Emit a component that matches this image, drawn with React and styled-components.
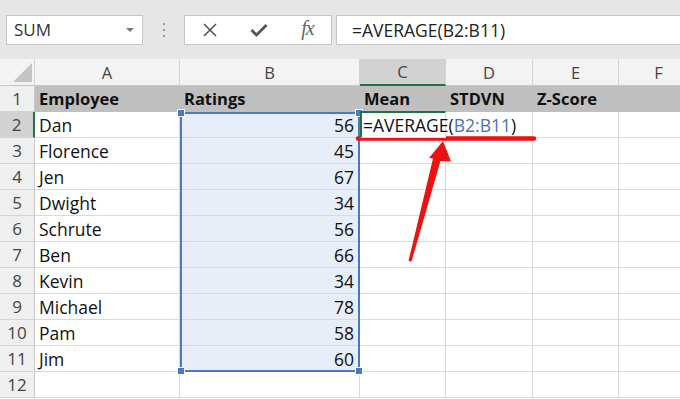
import React from "react";
import styled, { createGlobalStyle } from "styled-components";

const Global = createGlobalStyle`
  html, body { margin: 0; padding: 0; background: #fff; }
  body { font-family: "Open Sans", "Liberation Sans", sans-serif; }
`;

const COLS = [35, 145, 180, 86, 87, 86, 80];
const ROW_H = 26;

const Page = styled.div`
  position: relative;
  width: 680px;
  height: 399px;
  overflow: hidden;
  background: #fff;
`;

const Toolbar = styled.div`
  height: 59px;
  background: #e6e6e6;
  display: flex;
  align-items: center;
  padding: 0 0 0 6px;
  box-sizing: border-box;
`;

const NameBox = styled.div`
  width: 137px;
  height: 30px;
  background: #fff;
  border: 1px solid #c6c6c6;
  box-sizing: border-box;
  display: flex;
  align-items: center;
  justify-content: space-between;
  padding: 0 8px 0 7px;
  font-size: 17px;
  color: #333;
`;

const Caret = styled.span`
  width: 0;
  height: 0;
  border-left: 4px solid transparent;
  border-right: 4px solid transparent;
  border-top: 4px solid #777;
`;

const Grip = styled.div`
  width: 41px;
  display: flex;
  flex-direction: column;
  align-items: center;
  gap: 4px;
  span {
    width: 2px;
    height: 2px;
    background: #9a9a9a;
  }
`;

const IconBox = styled.div`
  width: 148px;
  height: 30px;
  background: #fff;
  border: 1px solid #c6c6c6;
  box-sizing: border-box;
  display: grid;
  grid-template-columns: repeat(3, 49px);
  align-items: center;
  justify-items: center;
  color: #555;
`;

const Fx = styled.span`
  font-family: "Liberation Serif", serif;
  font-style: italic;
  font-size: 20px;
  color: #666;
  letter-spacing: -1px;
  margin-top: -2px;
`;

const FormulaBox = styled.div`
  margin-left: 4px;
  flex: 1;
  height: 30px;
  background: #fff;
  border: 1px solid #c6c6c6;
  border-right: none;
  box-sizing: border-box;
  display: flex;
  align-items: center;
  padding-left: 15px;
  font-size: 17.5px;
  color: #222;
`;

const Sheet = styled.div`
  display: grid;
  grid-template-columns: ${COLS.map((c) => c + "px").join(" ")};
  grid-template-rows: 27px repeat(12, ${ROW_H}px);
`;

const ColHead = styled.div`
  background: ${(p) => (p.$active ? "#d2d2d2" : "#f3f3f3")};
  border-right: 1px solid #d4d4d4;
  border-bottom: ${(p) => (p.$active ? "2px solid #217346" : "1px solid #c8c8c8")};
  box-sizing: border-box;
  display: flex;
  align-items: center;
  justify-content: center;
  font-size: 16.5px;
  color: #444;
  position: relative;
`;

const Corner = styled(ColHead)`
  justify-content: flex-end;
  align-items: flex-end;
  padding: 0 2px 3px 0;
`;

const RowHead = styled.div`
  background: ${(p) => (p.$active ? "#d2d2d2" : "#efefef")};
  border-right: ${(p) => (p.$active ? "2px solid #217346" : "1px solid #c8c8c8")};
  border-bottom: 1px solid #d4d4d4;
  box-sizing: border-box;
  display: flex;
  align-items: center;
  justify-content: center;
  font-size: 17px;
  color: #444;
`;

const Cell = styled.div`
  background: ${(p) => (p.$title ? "#bfbfbf" : p.$sel ? "#e8eef8" : "#fff")};
  border-right: 1px solid ${(p) => (p.$title ? "#bfbfbf" : "#d9d9d9")};
  border-bottom: 1px solid ${(p) => (p.$title ? "#bfbfbf" : "#d9d9d9")};
  box-sizing: border-box;
  display: flex;
  align-items: center;
  justify-content: ${(p) => (p.$num ? "flex-end" : "flex-start")};
  padding: 0 5px 0 4px;
  font-size: ${(p) => (p.$title ? "16.5px" : "17.5px")};
  font-weight: ${(p) => (p.$title ? 700 : 400)};
  color: #111;
  white-space: nowrap;
  overflow: visible;
  position: relative;
  z-index: ${(p) => (p.$over ? 2 : 0)};
`;

const ActiveCell = styled(Cell)`
  border-top: 2px solid #217346;
  border-left: 2px solid #217346;
  margin-top: -1px;
  padding-left: 1px;
  background: #fff;
`;

const Ref = styled.span`
  color: #4472c4;
`;

const Cursor = styled.span`
  display: inline-block;
  width: 1px;
  height: 20px;
  background: #111;
  margin-left: 2px;
`;

const Selection = styled.div`
  position: absolute;
  left: 180px;
  top: 112px;
  width: 180px;
  height: 260px;
  border: 2px solid #4a78c2;
  box-sizing: border-box;
  pointer-events: none;
`;

const Handle = styled.span`
  position: absolute;
  width: 6px;
  height: 6px;
  background: #4a78c2;
  border: 1px solid #fff;
  box-sizing: content-box;
  ${(p) => (p.$top ? "top: -5px;" : "bottom: -5px;")}
  ${(p) => (p.$left ? "left: -5px;" : "right: -5px;")}
`;

const Annotation = styled.svg`
  position: absolute;
  left: 0;
  top: 0;
  pointer-events: none;
`;

const rows = [
  ["Dan", 56],
  ["Florence", 45],
  ["Jen", 67],
  ["Dwight", 34],
  ["Schrute", 56],
  ["Ben", 66],
  ["Kevin", 34],
  ["Michael", 78],
  ["Pam", 58],
  ["Jim", 60],
];

const letters = ["A", "B", "C", "D", "E", "F"];
const titles = ["Employee", "Ratings", "Mean", "STDVN", "Z-Score", ""];

export default function App() {
  return (
    <Page>
      <Global />
      <Toolbar>
        <NameBox>
          SUM <Caret />
        </NameBox>
        <Grip>
          <span />
          <span />
          <span />
        </Grip>
        <IconBox>
          <svg width="16" height="16" viewBox="0 0 16 16">
            <path d="M2 2 L14 14 M14 2 L2 14" stroke="#555" strokeWidth="1.6" fill="none" />
          </svg>
          <svg width="20" height="18" viewBox="0 0 20 18">
            <path d="M2.5 9 L7.5 14 L17.5 4" stroke="#555" strokeWidth="2.8" fill="none" />
          </svg>
          <Fx>fx</Fx>
        </IconBox>
        <FormulaBox>=AVERAGE(B2:B11)</FormulaBox>
      </Toolbar>

      <Sheet>
        <Corner>
          <svg width="19" height="19" viewBox="0 0 19 19">
            <polygon points="0,19 19,19 19,0" fill="#c4c4c4" />
          </svg>
        </Corner>
        {letters.map((l) => (
          <ColHead key={l} $active={l === "C"}>
            {l}
          </ColHead>
        ))}

        <RowHead>1</RowHead>
        {titles.map((t, i) => (
          <Cell key={i} $title>
            {t}
          </Cell>
        ))}

        {rows.map(([name, val], i) => (
          <React.Fragment key={name}>
            <RowHead $active={i === 0}>{i + 2}</RowHead>
            <Cell>{name}</Cell>
            <Cell $sel $num>
              {val}
            </Cell>
            {i === 0 ? (
              <ActiveCell $over>
                =AVERAGE(<Ref>B2:B11</Ref>)<Cursor />
              </ActiveCell>
            ) : (
              <Cell />
            )}
            <Cell />
            <Cell />
            <Cell />
          </React.Fragment>
        ))}

        <RowHead>12</RowHead>
        {letters.map((l) => (
          <Cell key={l} />
        ))}
      </Sheet>

      <Selection>
        <Handle $top $left />
        <Handle $top />
        <Handle $left />
        <Handle />
      </Selection>

      <Annotation width="680" height="399" viewBox="0 0 680 399">
        <line x1="358" y1="138.5" x2="534" y2="138.5" stroke="#ee1111" strokeWidth="4.5" strokeLinecap="round" />
        <polygon
          points="443,141 429,158 433,158.5 408.5,261 411.5,261.5 440.5,161 451,161.5"
          fill="#ee1111"
        />
      </Annotation>
    </Page>
  );
}
